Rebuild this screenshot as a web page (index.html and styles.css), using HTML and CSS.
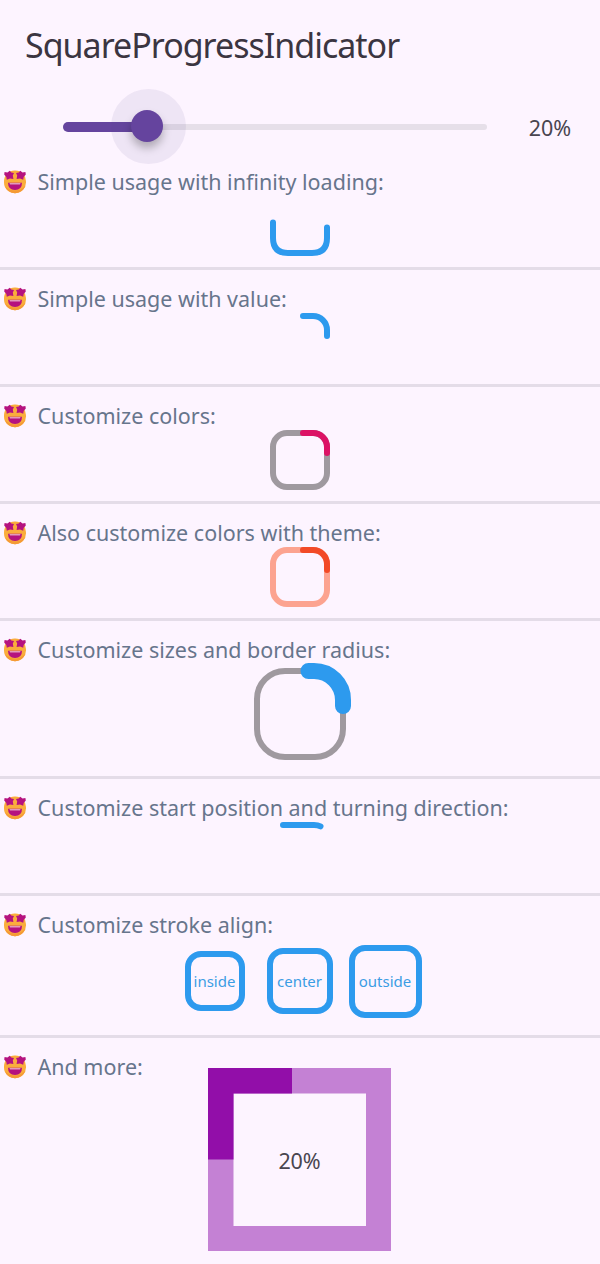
FILE: index.html
```html
<!DOCTYPE html>
<html lang="en">
<head>
<meta charset="utf-8">
<title>SquareProgressIndicator</title>
<link rel="stylesheet" href="styles.css">
</head>
<body>
<svg class="defs" aria-hidden="true">
  <symbol id="star-eyes" viewBox="0 0 24 24">
    <rect x="1" y=".6" width="22" height="22.6" rx="10.6" fill="#faad3c"/>
    <path d="M1.8 16 Q12 25 22.2 16 Q19.5 23.2 12 23.2 Q4.5 23.2 1.8 16" fill="#f59a35"/>
    <path d="M6.8 .8 8.3 2.6 11 3 9.8 5.4 10.4 9 7 8.5 3.8 9.8 3.3 7 1.2 4.4 1.6 2 4.4 2.4Z" fill="#b5127f"/>
    <path d="M17.2 .8 19.6 2.4 22.4 2 22.8 4.4 20.7 7 20.2 9.8 17 8.5 13.6 9 14.2 5.4 13 3 15.7 2.6Z" fill="#b5127f"/>
    <path d="M5 12.8 H19 Q19 20 12 20 Q5 20 5 12.8Z" fill="#b5127f"/>
    <path d="M6.5 13 H17.5 L17 14.6 H7Z" fill="#e29abb"/>
  </symbol>
</svg>
<header class="header"><h1 class="title">SquareProgressIndicator</h1></header>
<div class="slider-row">
  <div class="track">
    <div class="track-active"></div>
    <div class="halo"></div>
    <div class="thumb"></div>
  </div>
  <span class="percent">20%</span>
</div>
<main>
  <section class="section">
    <div class="label"><svg class="emoji"><use href="#star-eyes"/></svg><span>Simple usage with infinity loading:</span></div>
    <svg class="ring" viewBox="0 0 60 60"><path class="blue" d="M3 26.5 V42 Q3 57 18 57 H42 Q57 57 57 42 V31.5"/></svg>
  </section>
  <section class="section">
    <div class="label"><svg class="emoji"><use href="#star-eyes"/></svg><span>Simple usage with value:</span></div>
    <svg class="ring" viewBox="0 0 60 60"><path class="blue" d="M33 3 H43 A14 14 0 0 1 57 17 V23"/></svg>
  </section>
  <section class="section">
    <div class="label"><svg class="emoji"><use href="#star-eyes"/></svg><span>Customize colors:</span></div>
    <svg class="ring" viewBox="0 0 60 60"><rect class="gray" x="3" y="3" width="54" height="54" rx="14"/><path class="pink" d="M33 3 H43 A14 14 0 0 1 57 17 V23"/></svg>
  </section>
  <section class="section">
    <div class="label"><svg class="emoji"><use href="#star-eyes"/></svg><span>Also customize colors with theme:</span></div>
    <svg class="ring" viewBox="0 0 60 60"><rect class="salmon" x="3" y="3" width="54" height="54" rx="14"/><path class="orange" d="M33 3 H43 A14 14 0 0 1 57 17 V23"/></svg>
  </section>
  <section class="section">
    <div class="label"><svg class="emoji"><use href="#star-eyes"/></svg><span>Customize sizes and border radius:</span></div>
    <svg class="ring ring-large" viewBox="0 0 101 101"><rect class="gray" x="7" y="7" width="86" height="86" rx="28"/><path class="blue thick" d="M58.5 7 H64 A29 29 0 0 1 93 36 V42"/></svg>
  </section>
  <section class="section">
    <div class="label"><svg class="emoji"><use href="#star-eyes"/></svg><span>Customize start position and turning direction:</span></div>
    <svg class="ring" viewBox="0 0 60 60"><path class="blue" d="M13 3 H44 Q48 3 50.5 4.3"/></svg>
  </section>
  <section class="section">
    <div class="label"><svg class="emoji"><use href="#star-eyes"/></svg><span>Customize stroke align:</span></div>
    <div class="aligns">
      <div class="align inside">inside</div>
      <div class="align center">center</div>
      <div class="align outside">outside</div>
    </div>
  </section>
  <section class="section last">
    <div class="label"><svg class="emoji"><use href="#star-eyes"/></svg><span>And more:</span></div>
    <div class="square">
      <svg class="square-art" viewBox="0 0 183 183"><path fill="#c481d4" d="M0 0H183V183H0ZM25.5 25.5V158H158V25.5Z" fill-rule="evenodd"/><path fill="#920ea9" d="M0 0H84V25.5H25.5V91.5H0Z"/></svg>
      <span class="percent">20%</span>
    </div>
  </section>
</main>
</body>
</html>
```

FILE: styles.css
```css
* { box-sizing: border-box; }
body { margin: 0; width: 600px; height: 1264px; overflow: hidden; background: #fdf4ff; font-family: "Noto Sans", "Open Sans", sans-serif; color: #49454f; }
.defs { display: block; width: 0; height: 0; }
.header { height: 89px; padding: 22px 0 0 25px; }
.title { margin: 0; font-size: 34px; line-height: 47px; font-weight: 400; color: #3b3541; white-space: nowrap; letter-spacing: -1px; }
.slider-row { height: 64px; padding: 0 29px 0 63px; display: flex; justify-content: space-between; }
.track { position: relative; width: 424px; height: 6px; margin-top: 34.5px; border-radius: 3px; background: #e6dfe9; }
.track-active { position: absolute; left: 0; top: -2px; width: 84px; height: 10px; border-radius: 5px; background: #65449e; }
.halo { position: absolute; left: 47.5px; top: -34.5px; width: 75px; height: 75px; border-radius: 50%; background: rgba(90, 75, 140, 0.09); }
.thumb { position: absolute; left: 68px; top: -13.5px; width: 32px; height: 32px; border-radius: 50%; background: #65449e; box-shadow: 0 6px 8px rgba(0, 0, 0, 0.26); }
.percent { font-size: 21.5px; line-height: 30px; letter-spacing: -0.1px; }
.slider-row .percent { margin-top: 24px; }
.section { padding: 17px 0 11px; border-bottom: 3px solid #e4dce8; }
.last { border: 0; }
.label { height: 26px; padding-left: 3px; display: flex; align-items: center; gap: 10.5px; font-size: 21.5px; line-height: 26px; color: #67758c; white-space: nowrap; }
.label span { margin-top: -2px; }
.emoji { width: 24px; height: 24px; flex: none; margin-top: -2px; }
.ring { display: block; width: 60px; height: 60px; margin: 0 auto; overflow: visible; fill: none; stroke-width: 6; stroke-linecap: round; }
.ring-large { width: 101px; height: 101px; }
.blue { stroke: #2d9aee; }
.gray { stroke: #9f999f; }
.pink { stroke: #dc1265; }
.salmon { stroke: #fca390; }
.orange { stroke: #f24a27; }
.ring .thick { stroke-width: 16; }
.aligns { height: 85px; display: flex; justify-content: center; align-items: center; gap: 16px; padding: 0 0 1px 6px; }
.align { display: flex; align-items: center; justify-content: center; border: 6px solid #2d9aee; font-size: 15px; color: #3b9de4; }
.inside { width: 60px; height: 60px; border-radius: 16px; margin-right: 6px; }
.center { width: 66px; height: 66px; border-radius: 16px; }
.outside { width: 73px; height: 73px; border-radius: 16px; }
.square { position: relative; width: 183px; height: 183px; margin: -13px 0 0 208px; display: flex; align-items: center; justify-content: center; }
.square-art { position: absolute; inset: 0; width: 183px; height: 183px; }
.square .percent { position: relative; margin-top: 2px; }
```
